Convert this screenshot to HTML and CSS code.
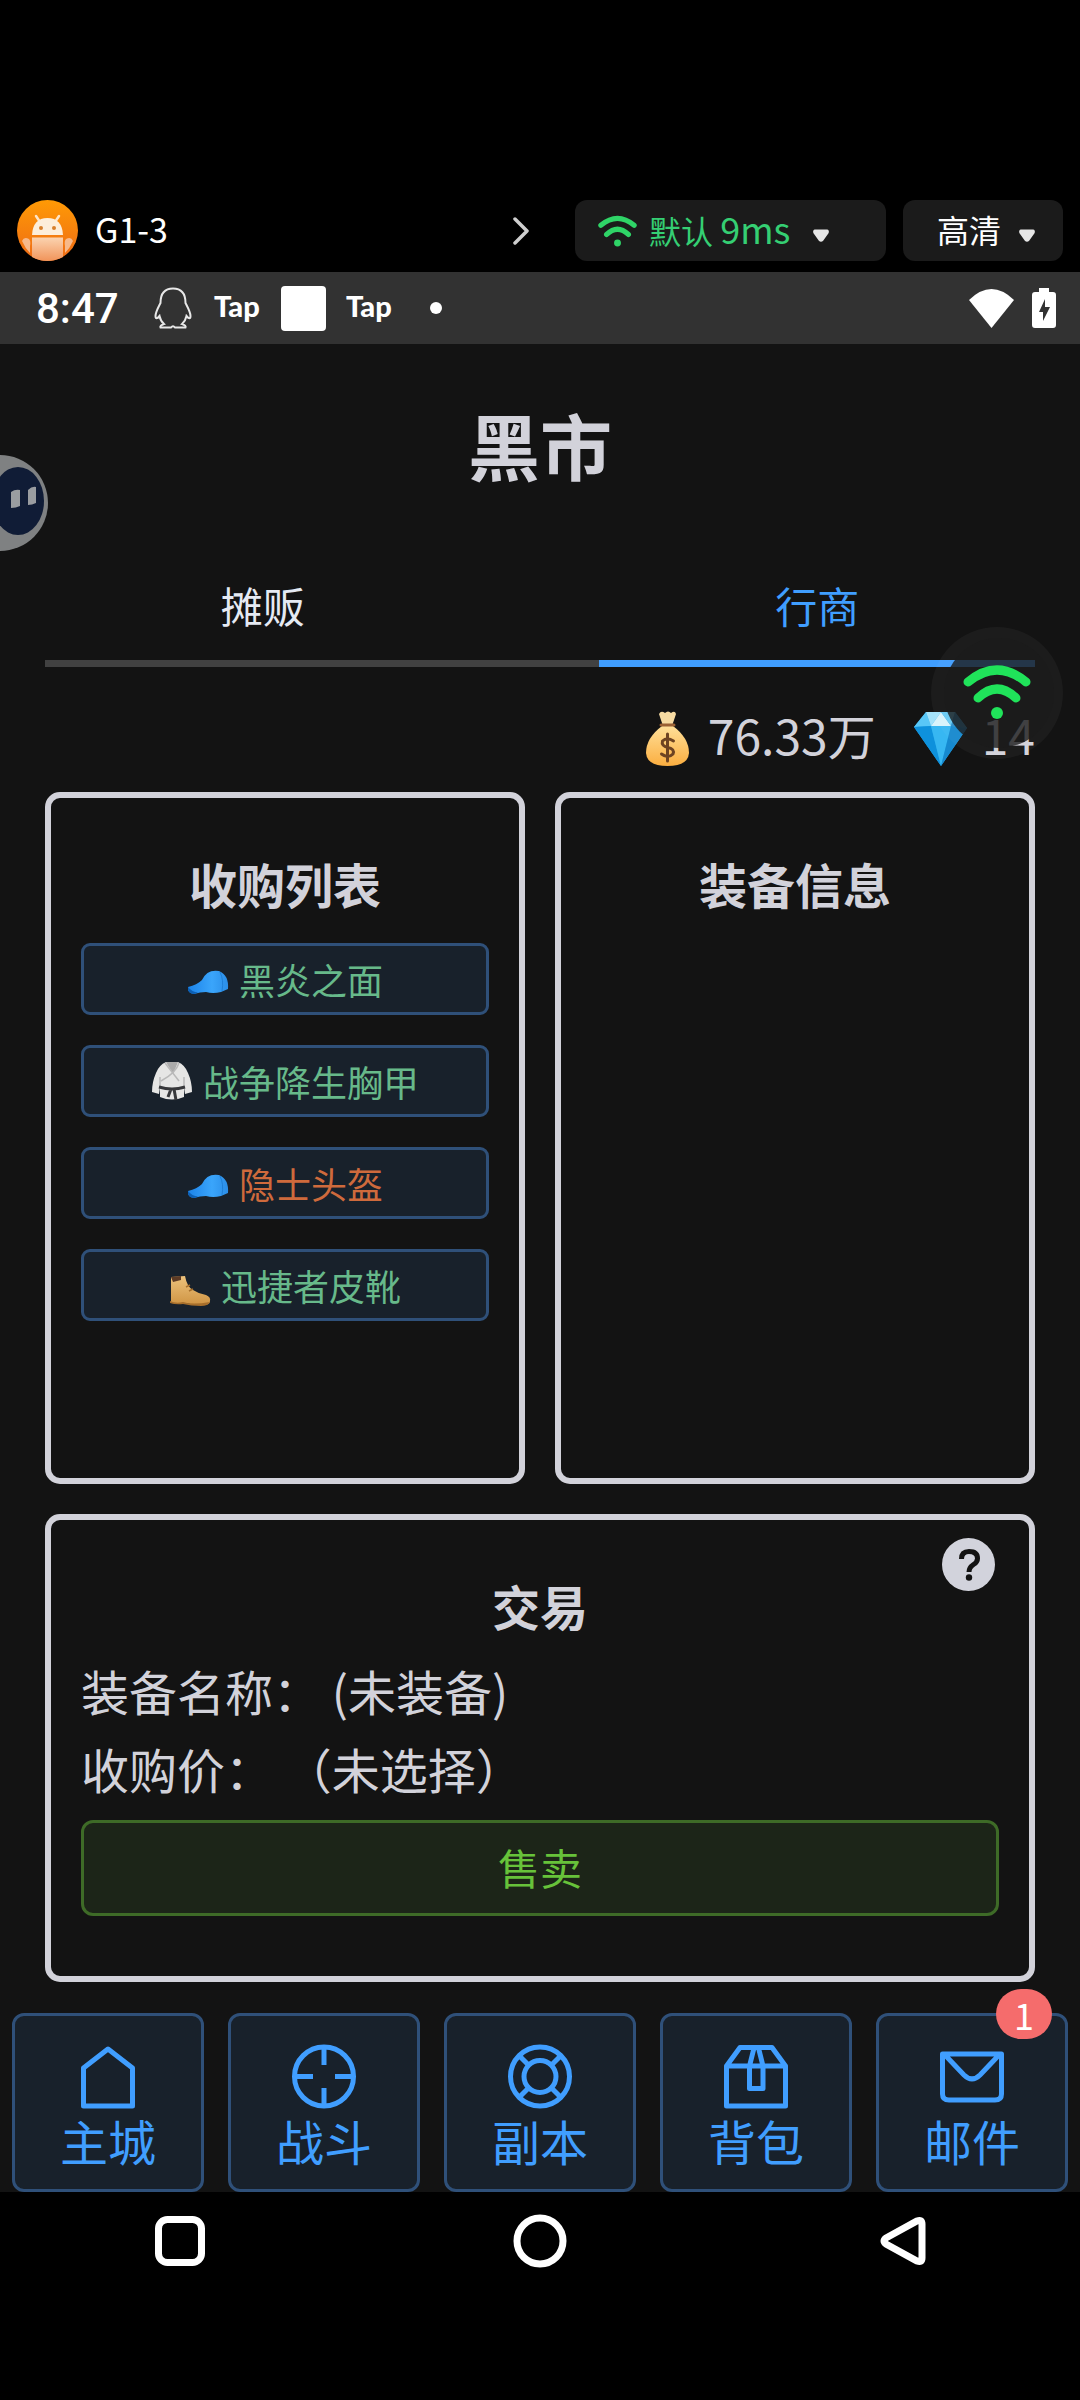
FILE: index.html
```html
<!DOCTYPE html>
<html lang="zh-CN">
<head>
<meta charset="utf-8">
<meta name="viewport" content="width=device-width, initial-scale=1">
<title>黑市</title>
<link rel="stylesheet" href="styles.css">
</head>
<body>
<svg class="defs" width="0" height="0" aria-hidden="true">
  <defs>
    <linearGradient id="avatar-bg" x1="0" y1="0" x2="0" y2="1"><stop offset="0" stop-color="#ff9a05"/><stop offset="1" stop-color="#ee6a16"/></linearGradient>
    <linearGradient id="avatar-body" x1="0" y1="0" x2="0" y2="1"><stop offset="0" stop-color="#fbd3b0"/><stop offset="1" stop-color="#f1945a"/></linearGradient>
    <linearGradient id="bag" x1="0" y1="0" x2="0" y2="1"><stop offset="0" stop-color="#ffdf98"/><stop offset="1" stop-color="#fbae40"/></linearGradient>
    <linearGradient id="boot" x1="0" y1="0" x2="0" y2="1"><stop offset="0" stop-color="#ecc27c"/><stop offset="1" stop-color="#cf9443"/></linearGradient>
    <linearGradient id="capfill" x1="0" y1="0" x2="1" y2="0"><stop offset="0" stop-color="#1c83e8"/><stop offset=".6" stop-color="#3aa5fb"/><stop offset="1" stop-color="#2b8ee8"/></linearGradient>
    <symbol id="signal" viewBox="0 0 68 54">
      <path d="M5 17Q34-7 63 17M15 33Q34 15 53 33" fill="none" stroke="currentColor" stroke-width="9" stroke-linecap="round"/>
      <circle cx="34" cy="48" r="6" fill="currentColor"/>
    </symbol>
    <symbol id="caret" viewBox="0 0 18 15">
      <path d="M3 2.5H15Q16.500 3 15.500 5L10.500 12Q9 13.500 7.500 12L2.500 5Q1.500 3 3 2.500Z" fill="#e6e6e6" stroke="#e6e6e6" stroke-width="2" stroke-linejoin="round"/>
    </symbol>
    <symbol id="cap" viewBox="0 0 42 42">
      <path d="M1 29Q0 35 7 36Q13 34 19 34Q26 36 34 34L41 31Q42 17 32 13Q20 11 15 22Q10 27 1 29Z" fill="url(#capfill)"/>
      <path d="M1 29Q0 35 7 36L11 34.500Q5 34 1 29Z" fill="#0c5fb4"/>
      <path d="M33 14Q37 22 35 33" fill="none" stroke="#1f7fd6" stroke-width="1"/>
    </symbol>
  </defs>
</svg>

<header class="stream-bar">
  <svg class="avatar" viewBox="0 0 61 61" aria-hidden="true">
    <circle cx="30.500" cy="30.500" r="30.500" fill="url(#avatar-bg)"/>
    <path d="M19 16l4 6M42 16l-4 6" stroke="#fde5c8" stroke-width="2.500" stroke-linecap="round"/>
    <path d="M15 35Q16 18 30.500 18T46 35Z" fill="#fdeeda"/>
    <circle cx="24" cy="28" r="2" fill="#d8802c"/><circle cx="37" cy="28" r="2" fill="#d8802c"/>
    <path d="M15 37.500H46V57Q30 65 15 57Z" fill="url(#avatar-body)"/>
    <path d="M5 41Q7 36 12 39Q14 41 13 46V53Q8 48 5 41ZM56 41Q54 36 49 39Q47 41 48 46V53Q53 48 56 41Z" fill="#f7b98a"/>
  </svg>
  <span class="device-name">G1-3</span>
  <svg class="chevron" viewBox="0 0 16 28" aria-hidden="true"><path d="M2 2L14 14 2 26" fill="none" stroke="#cfcfcf" stroke-width="3.500" stroke-linecap="round" stroke-linejoin="round"/></svg>
  <button class="pill pill-network" type="button"><svg class="pill-signal" aria-hidden="true"><use href="#signal"/></svg><span class="pill-latency">默认 <span class="latency-value">9ms</span></span><svg class="caret" aria-hidden="true"><use href="#caret"/></svg></button>
  <button class="pill pill-quality" type="button"><span class="pill-text">高清</span><svg class="caret" aria-hidden="true"><use href="#caret"/></svg></button>
</header>

<div class="status-bar">
  <span class="clock">8:47</span>
  <svg class="qq" viewBox="0 0 38 42" aria-hidden="true"><path d="M19 1.500C9 1.500 6.500 9 6.500 16C4 21 1.500 25 1.500 29C1.500 32 3 32 5.500 29Q6.500 34 10 37Q5.500 38.500 6.500 40.500H17Q19 38 21 40.500H31.500Q32.500 38.500 28 37Q31.500 34 32.500 29C35 32 36.500 32 36.500 29C36.500 25 34 21 31.500 16C31.500 9 29 1.500 19 1.500Z" fill="none" stroke="#e8e8e8" stroke-width="2"/></svg>
  <span class="tap">Tap</span>
  <span class="app-square"></span>
  <span class="tap">Tap</span>
  <span class="more-dot"></span>
  <svg class="wifi" viewBox="0 0 45 39" aria-hidden="true"><path d="M0 11Q22.500-11 45 11L22.500 39Z" fill="#fff"/></svg>
  <svg class="battery" viewBox="0 0 24 40" aria-hidden="true"><path d="M7 0H17V4H21Q24 4 24 7V37Q24 40 21 40H3Q0 40 0 37V7Q0 4 3 4H7Z" fill="#fff"/><path d="M13 11L7 24H11V33L18 19H13Z" fill="#323232"/></svg>
</div>

<div class="app">
  <main class="market">
    <h1 class="title">黑市</h1>
    <div class="tabs" role="tablist">
      <button class="tab" type="button" role="tab" aria-selected="false">摊贩</button>
      <button class="tab tab-active" type="button" role="tab" aria-selected="true">行商</button>
    </div>
    <div class="wallet">
      <span class="coin"><svg class="coin-icon" viewBox="0 0 56 60" aria-hidden="true">
        <path d="M20 5Q22 1 26 4Q29 1 32 4Q36 1 37 5Q35 11 33 17H24Q22 11 20 5Z" fill="#f7dba2"/>
        <path d="M23 17H34Q50 29 50 44Q49 57 28.500 57T7 44Q7 29 23 17Z" fill="url(#bag)"/>
        <path d="M22 16H35" stroke="#9a6034" stroke-width="3" stroke-linecap="round"/>
        <path d="M34.500 32Q28 27.500 23.500 32Q22 37 29 38.500Q36 40 34 45Q29 50 22.500 45M28.500 25V52" fill="none" stroke="#6e4322" stroke-width="3" stroke-linecap="round"/>
      </svg>76.33万</span>
      <span class="coin"><svg class="coin-icon" viewBox="0 0 56 60" aria-hidden="true">
        <path d="M13 3H42L54 19 28 57 1 18Z" fill="#23a7ea"/>
        <path d="M13 3L1 18 18 17Z" fill="#59c7f7"/><path d="M13 3H28L18 17Z" fill="#a4e3fb"/><path d="M28 3L38 17H18Z" fill="#d8f3fb"/><path d="M28 3H42L38 17Z" fill="#69c9f2"/><path d="M42 3L54 19 38 17Z" fill="#2d8bc4"/>
        <path d="M1 18L18 17 28 57Z" fill="#0e91dc"/><path d="M18 17H38L28 57Z" fill="#37b7f2"/><path d="M38 17L54 19 28 57Z" fill="#1689cf"/>
      </svg>14</span>
    </div>
    <div class="columns">
      <section class="panel">
        <h2 class="panel-title">收购列表</h2>
        <div class="items">
          <button class="item item-green" type="button"><svg class="item-icon" aria-hidden="true"><use href="#cap"/></svg>黑炎之面</button>
          <button class="item item-green" type="button"><svg class="item-icon" viewBox="0 0 42 42" aria-hidden="true">
            <path d="M15 2H27Q34 5 37 13Q41 22 41 32L34 34 33 27V37Q21 42 9 37V27L8 34 1 32Q1 22 5 13Q8 5 15 2Z" fill="#e6e6e5"/>
            <path d="M15 2H27L22 14Z" fill="#aaa"/><path d="M14 3L28 21M28 3Q25 13 10 21M9 17V27M33 17V27" fill="none" stroke="#b9b9b9" stroke-width="1.500"/>
            <path d="M8 27Q21 31 34 27M20 29L17 37M23 29L25 40" fill="none" stroke="#37383b" stroke-width="3"/>
          </svg>战争降生胸甲</button>
          <button class="item item-orange" type="button"><svg class="item-icon" aria-hidden="true"><use href="#cap"/></svg>隐士头盔</button>
          <button class="item item-green" type="button"><svg class="item-icon" viewBox="0 0 42 42" aria-hidden="true">
            <path d="M2 13L16 12Q18 23 24 26Q30 30 37 31Q42 33 41 37Q41 41 35 41H25Q17 38 12 40L2 39Z" fill="url(#boot)"/>
            <path d="M2 13L12 12V16L4 18Z" fill="#5c3a24"/><path d="M1 37Q7 40 14 38Q23 41 41 38Q39 42 32 42Q22 42 14 40Q7 41 1 39Z" fill="#a66e2b"/>
            <path d="M17 23l4-2M20 27l4-2" stroke="#a66e2b" stroke-width="1.500"/>
          </svg>迅捷者皮靴</button>
        </div>
      </section>
      <section class="panel">
        <h2 class="panel-title">装备信息</h2>
      </section>
    </div>
    <section class="panel trade">
      <button class="help" type="button" aria-label="帮助"><svg viewBox="0 0 53 53" aria-hidden="true"><circle cx="26.500" cy="26.500" r="26.500" fill="#d2d3dc"/><path d="M19.500 21Q19.500 13.500 27 13.500Q35.500 13.500 35.500 20.500Q35.500 24 31.500 26.500Q27 29.500 27 34" fill="none" stroke="#131313" stroke-width="5"/><circle cx="27" cy="39.500" r="3.200" fill="#131313"/></svg></button>
      <h2 class="panel-title">交易</h2>
      <p class="detail">装备名称： (未装备)</p>
      <p class="detail">收购价： （未选择）</p>
      <button class="sell" type="button">售卖</button>
    </section>
  </main>

  <nav class="menu">
    <button class="menu-item" type="button"><svg class="menu-icon" viewBox="0 0 72 72" aria-hidden="true"><path d="M11.500 28L36 9 60.500 28V66H11.500Z"/></svg>主城</button>
    <button class="menu-item" type="button"><svg class="menu-icon" viewBox="0 0 72 72" aria-hidden="true"><circle cx="36" cy="36.500" r="29.500"/><path d="M36 7V25M36 48V66M6.500 36.500H25M47 36.500H65.500"/></svg>战斗</button>
    <button class="menu-item" type="button"><svg class="menu-icon" viewBox="0 0 72 72" aria-hidden="true"><circle cx="36" cy="36.500" r="29.500"/><circle cx="36" cy="36.500" r="16"/><path d="M15.500 16L25 25.500M56.500 16L47 25.500M15.500 57L25 47.500M56.500 57L47 47.500"/></svg>副本</button>
    <button class="menu-item" type="button"><svg class="menu-icon" viewBox="0 0 72 72" aria-hidden="true"><path d="M6.500 26H65.500V66H6.500ZM6.500 26L20 7.500H52L65.500 26M34 8L29.500 26V48.500H43V26L38.500 8"/></svg>背包</button>
    <button class="menu-item" type="button"><svg class="menu-icon" viewBox="0 0 72 72" aria-hidden="true"><path d="M6.500 14H65.500V54Q65.500 60 59 60H13Q6.500 60 6.500 54ZM9 15L28 35Q36 43 44 35L63 15"/></svg>邮件<span class="badge">1</span></button>
  </nav>

  <svg class="assistant" viewBox="0 0 50 98" aria-hidden="true"><circle cx="-10" cy="49" r="48" fill="none"/><circle cx="0" cy="49" r="48" fill="#7f8182"/><ellipse cx="18" cy="47" rx="26" ry="34" fill="#101c36"/><path d="M11 38Q15 35 20 36V52Q16 54 11 54ZM28 36Q32 32 36 33V49Q32 51 28 51Z" fill="#9a9da1"/></svg>
  <svg class="float-signal" viewBox="0 0 132 132" aria-hidden="true">
    <circle cx="66" cy="66" r="66" fill="#fff" fill-opacity=".04"/>
    <circle cx="68" cy="66" r="55" fill="#1c1c1c" fill-opacity=".8"/>
    <use class="float-mark" href="#signal" x="32" y="38" width="68" height="54"/>
  </svg>
</div>

<footer class="system-nav">
  <button class="system-key" type="button" aria-label="最近任务"><svg viewBox="0 0 56 56"><rect x="6.500" y="6.500" width="43" height="43" rx="9"/></svg></button>
  <button class="system-key" type="button" aria-label="主屏幕"><svg viewBox="0 0 56 56"><circle cx="28" cy="28" r="23"/></svg></button>
  <button class="system-key" type="button" aria-label="返回"><svg viewBox="0 0 56 56"><path d="M14 25L45 8Q50 6 50 11V45Q50 50 45 48L14 31Q10 28 14 25Z"/></svg></button>
</footer>
</body>
</html>
```
FILE: styles.css
```css
* { box-sizing: border-box; }

body {
  margin: 0;
  background: #000;
  color: #d2d2da;
  font-family: "Noto Sans CJK SC", "Noto Sans", sans-serif;
}

button {
  margin: 0;
  padding: 0;
  border: 0;
  background: none;
  color: inherit;
  font: inherit;
  cursor: pointer;
}

h1, h2, p { margin: 0; }
svg { display: block; flex: none; }
.defs { position: absolute; }

/* Streaming toolbar */
.stream-bar {
  display: flex;
  align-items: center;
  padding: 200px 17px 11px;
  color: #fff;
  font-size: 32px;
}
.avatar { width: 61px; height: 61px; }
.device-name { flex: 1; margin-left: 17px; padding-bottom: 4px; font-size: 34px; line-height: 48px; }
.chevron { width: 16px; height: 28px; margin-right: 46px; }
.pill {
  display: flex;
  align-items: center;
  height: 61px;
  border-radius: 12px;
  background: #1b1b1b;
  line-height: 48px;
}
.pill-network { width: 311px; padding-left: 23px; margin-right: 17px; color: #35cf73; }
.pill-quality { width: 160px; padding-left: 34px; gap: 17px; }
.pill-signal { width: 39px; height: 32px; margin-right: 12px; color: #2fd467; }
.pill-latency { width: 163px; padding-bottom: 4px; text-align: left; white-space: nowrap; }
.latency-value { font-size: 36px; }
.pill-text { padding-bottom: 4px; }
.caret { width: 18px; height: 15px; margin-top: 10px; }

/* Android status bar */
.status-bar {
  display: flex;
  align-items: center;
  height: 72px;
  padding: 0 24px 0 36px;
  background: #323232;
  color: #fff;
}
.clock { width: 118px; padding-top: 2px; font: 500 42px/48px Roboto, sans-serif; }
.qq { width: 38px; height: 42px; margin-right: 22px; }
.tap { width: 67px; padding-bottom: 4px; font: 900 29px/32px Lato, sans-serif; }
.app-square { width: 45px; height: 45px; margin-right: 20px; border-radius: 4px; background: #fff; }
.more-dot { width: 12px; height: 12px; margin-left: 17px; border-radius: 50%; background: #fff; }
.wifi { width: 45px; height: 39px; margin: 0 18px 0 auto; }
.battery { width: 24px; height: 40px; }

/* Game page */
.app { position: relative; background: #131313; overflow: hidden; }
.market { padding: 50px 45px 0; }
.title { font-size: 72px; line-height: 100px; font-weight: 700; text-align: center; }

.tabs {
  display: flex;
  justify-content: space-between;
  margin-top: 81px;
  border-bottom: 7px solid #414141;
}
.tab {
  width: 44%;
  margin-bottom: -7px;
  padding-bottom: 25px;
  border-bottom: 7px solid transparent;
  color: #e5eaf3;
  font-size: 42px;
  line-height: 60px;
}
.tab-active { border-color: #409eff; color: #409eff; }

.wallet {
  display: flex;
  justify-content: flex-end;
  gap: 37px;
  margin-top: 37px;
  font-size: 48px;
  line-height: 60px;
}
.coin { display: flex; gap: 13px; }
.coin-icon { width: 56px; height: 60px; margin: 5px 0 -5px; }

.columns { display: grid; grid-template-columns: 1fr 1fr; gap: 30px; margin: 28px 0 30px; }
.panel {
  min-height: 468px;
  padding: 19px 30px 30px;
  border: 6px solid #d2d2da;
  border-radius: 15px;
}
.columns .panel { min-height: 692px; }
.panel-title {
  margin: 30px 0 24px;
  font-size: 48px;
  line-height: 72px;
  font-weight: 700;
  text-align: center;
}
.columns .panel-title, .trade .panel-title { margin-top: 0; padding-top: 0; }
.columns .panel, .trade { padding-top: 49px; }
.items { display: flex; flex-direction: column; gap: 30px; }
.item {
  display: flex;
  align-items: center;
  justify-content: center;
  gap: 10px;
  height: 72px;
  border: 3px solid #2f5079;
  border-radius: 9px;
  background: #18212b;
  font-size: 36px;
  line-height: 48px;
}
.item-icon { width: 42px; height: 42px; }
.item-green { color: #67b98a; }
.item-orange { color: #cf6a3c; }

.trade { position: relative; }
.trade .panel-title { margin-bottom: 10px; }
.help { position: absolute; top: 18px; right: 34px; width: 53px; height: 53px; }
.detail { font-size: 48px; line-height: 78px; }
.sell {
  width: 100%;
  height: 96px;
  margin-top: 13px;
  padding-bottom: 4px;
  border: 3px solid #3e6b27;
  border-radius: 12px;
  background: #1c2518;
  color: #67c23a;
  font-size: 42px;
}

.menu {
  display: grid;
  grid-template-columns: repeat(5, 1fr);
  gap: 24px;
  margin-top: 31px;
  padding: 0 12px;
}
.menu-item {
  position: relative;
  display: flex;
  flex-direction: column;
  align-items: center;
  height: 179px;
  padding-top: 24px;
  border: 3px solid #2f5079;
  border-radius: 12px;
  background: #18212b;
  color: #409eff;
  font-size: 48px;
  line-height: 56px;
}
.menu-icon {
  width: 72px;
  height: 72px;
  fill: none;
  stroke: currentColor;
  stroke-width: 5;
  stroke-linejoin: round;
}
.badge {
  position: absolute;
  top: -27px;
  right: 13px;
  width: 56px;
  height: 50px;
  border-radius: 25px;
  background: #f56c6c;
  color: #fff;
  font-size: 36px;
  line-height: 50px;
}

/* Floating overlays */
.assistant { position: absolute; top: 110px; left: 0; width: 50px; height: 98px; }
.float-signal { position: absolute; top: 283px; right: 17px; width: 132px; height: 132px; }
.float-mark { color: #20e35a; }

/* Android navigation */
.system-nav {
  display: flex;
  justify-content: space-between;
  padding: 21px 152px 131px;
}
.system-key { width: 56px; height: 56px; }
.system-key svg { fill: none; stroke: #fff; stroke-width: 7; }
```
